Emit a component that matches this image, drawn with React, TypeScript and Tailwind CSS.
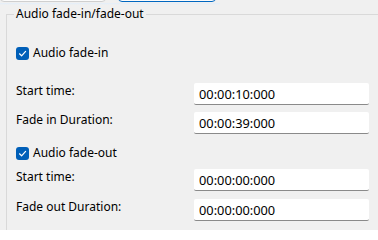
function Check() {
  return (
    <span className="flex h-[13px] w-[13px] items-center justify-center rounded-[3px] bg-[#005fb8]">
      <svg width="9" height="9" viewBox="0 0 9 9" fill="none">
        <path d="M1.5 4.8 L3.6 6.8 L7.6 2.4" stroke="white" strokeWidth="1.2" strokeLinecap="round" strokeLinejoin="round" />
      </svg>
    </span>
  );
}

function CheckRow({ label, className }: { label: string; className?: string }) {
  return (
    <div className={"flex h-[20px] items-center gap-[4px] " + (className ?? "")}>
      <Check />
      <span>{label}</span>
    </div>
  );
}

function TimeRow({ label, value, className }: { label: string; value: string; className?: string }) {
  return (
    <div className={"flex items-start " + (className ?? "")}>
      <span className="w-[178px] leading-[16px]">{label}</span>
      <div className="box-border flex h-[22px] w-[175px] items-center rounded-[2px] border-b border-b-[#8a8a8a] bg-white pl-[5px] pt-[2px] text-[12.8px]">
        {value}
      </div>
    </div>
  );
}

export default function App() {
  return (
    <div
      className="h-[230px] w-[378px] overflow-hidden bg-[#f0f0f0] text-[12px] text-black"
      style={{ fontFamily: '"Noto Sans", "Liberation Sans", sans-serif' }}
    >
      <div className="flex h-[3px] items-end overflow-hidden">
        <div className="mb-[1px] h-[20px] w-[106px] shrink-0 rounded-b-[4px] border border-[#cfcfcf] bg-[#fbfbfb]" />
        <div className="mb-[1px] ml-[12px] h-[20px] w-[98px] shrink-0 rounded-b-[4px] border border-[#0067c0] bg-[#fbfbfb]" />
      </div>
      <div className="h-[2px] w-[220px] bg-gradient-to-b from-[#e3eefa] to-[#f0f0f0]" />
      <fieldset className="ml-[6px] mt-[1px] w-[420px] border border-[#d9d9d9] pb-[20px] pl-[9px]">
        <legend className="-ml-[2px] px-[2px] leading-[16px]">Audio fade-in/fade-out</legend>
        <CheckRow label="Audio fade-in" className="mt-[21px]" />
        <TimeRow label="Start time:" value="00:00:10:000" className="mt-[20px]" />
        <TimeRow label="Fade in Duration:" value="00:00:39:000" className="mt-[7px]" />
        <CheckRow label="Audio fade-out" className="mt-[9px]" />
        <TimeRow label="Start time:" value="00:00:00:000" className="mt-[6px]" />
        <TimeRow label="Fade out Duration:" value="00:00:00:000" className="mt-[8px]" />
      </fieldset>
    </div>
  );
}
